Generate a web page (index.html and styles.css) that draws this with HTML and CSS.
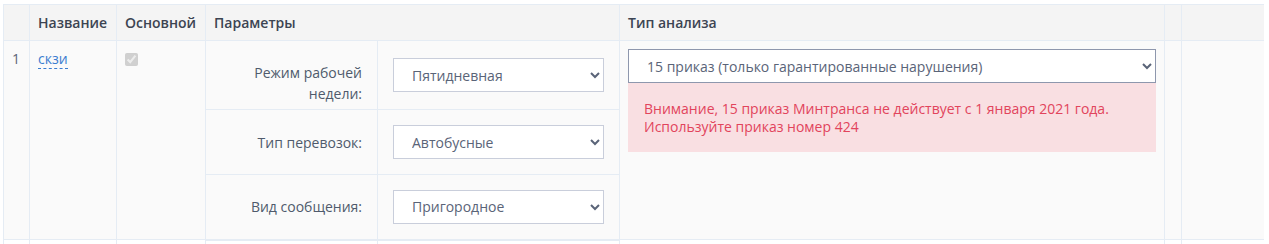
FILE: index.html
```html
<!DOCTYPE html>
<html lang="ru">

<head>
    <meta charset="UTF-8">
    <meta name="viewport" content="width=device-width, initial-scale=1.0">
    <title>Анализ</title>
    <link rel="stylesheet" href="styles.css">
</head>

<body>
    <table class="grid">
        <colgroup>
            <col style="width: 26px">
            <col style="width: 87px">
            <col style="width: 89px">
            <col style="width: 172px">
            <col style="width: 242px">
            <col style="width: 545px">
            <col style="width: 17px">
            <col style="width: 83px">
        </colgroup>
        <thead>
            <tr class="head">
                <th></th>
                <th>Название</th>
                <th>Основной</th>
                <th colspan="2">Параметры</th>
                <th>Тип анализа</th>
                <th></th>
                <th></th>
            </tr>
        </thead>
        <tbody>
            <tr class="row-first">
                <td rowspan="3" class="num">1</td>
                <td rowspan="3"><a href="#" class="dashed">скзи</a></td>
                <td rowspan="3"><input type="checkbox" class="check" checked disabled></td>
                <td class="label label-first">Режим рабочей недели:</td>
                <td class="control">
                    <select class="pick">
                        <option>Пятидневная</option>
                    </select>
                </td>
                <td rowspan="3" class="analysis">
                    <select class="pick pick-dark">
                        <option>15 приказ (только гарантированные нарушения)</option>
                    </select>
                    <div class="alert">
                        Внимание, 15 приказ Минтранса не действует с 1 января 2021 года.<br>
                        Используйте приказ номер 424
                    </div>
                </td>
                <td rowspan="3"></td>
                <td rowspan="3"></td>
            </tr>
            <tr class="row-param">
                <td class="label">Тип перевозок:</td>
                <td class="control">
                    <select class="pick">
                        <option>Автобусные</option>
                    </select>
                </td>
            </tr>
            <tr class="row-param row-last">
                <td class="label">Вид сообщения:</td>
                <td class="control">
                    <select class="pick">
                        <option>Пригородное</option>
                    </select>
                </td>
            </tr>
            <tr class="row-next">
                <td></td>
                <td></td>
                <td></td>
                <td></td>
                <td></td>
                <td></td>
                <td></td>
                <td></td>
            </tr>
        </tbody>
    </table>
</body>

</html>
```

FILE: styles.css
```css
body {
    margin: 4px 5px 0 3px;
    font-family: "Open Sans", Arial, sans-serif;
    font-size: 14px;
    color: #4f5a6c;
    background-color: white;
    overflow: hidden;
}

table.grid {
    width: 1261px;
    table-layout: fixed;
    border-collapse: collapse;
}

.grid th,
.grid td {
    border: 1px solid #e5ecf4;
    padding: 8px 8px;
    line-height: 20px;
    vertical-align: top;
    text-align: left;
}

.grid th {
    background-color: #f4f4f4;
    font-weight: 600;
    color: #3c4452;
    height: 18px;
    padding: 8px 8px 7px 8px;
}

.grid tbody td {
    background-color: #fafafa;
}

.num {
    color: #5a6478;
}

a.dashed {
    color: #3a7dd0;
    text-decoration: none;
    border-bottom: 1px dashed #3a7dd0;
}

.check {
    margin: 4px 0 0 0;
    width: 13px;
    height: 13px;
}

.grid td.label {
    text-align: right;
    vertical-align: middle;
    padding: 0 15px;
    line-height: 21px;
    color: #4f5a6c;
}

.grid td.label-first {
    padding-top: 16px;
}

.grid td.control {
    vertical-align: middle;
    padding: 0 15px;
}

.row-first {
    height: 69px;
}

.row-param {
    height: 65px;
}

.grid .row-last td.label,
.grid .row-last td.control {
    border-bottom: 2px solid #e5ecf4;
}

.grid .row-next td {
    background-color: white;
    height: 20px;
}

select.pick {
    width: 100%;
    height: 34px;
    padding: 0 10px 0 14px;
    font-family: "Open Sans", Arial, sans-serif;
    font-size: 14px;
    color: #5a6478;
    background-color: white;
    border: 1px solid #c9cedb;
    border-radius: 0;
}

select.pick-dark {
    border-color: #8e97ad;
}

.analysis {
    padding: 9px 8px 8px 8px;
}

.alert {
    background-color: #f9dfe2;
    color: #e2445c;
    padding: 17px 16px 16px 16px;
    line-height: 18px;
}
```
